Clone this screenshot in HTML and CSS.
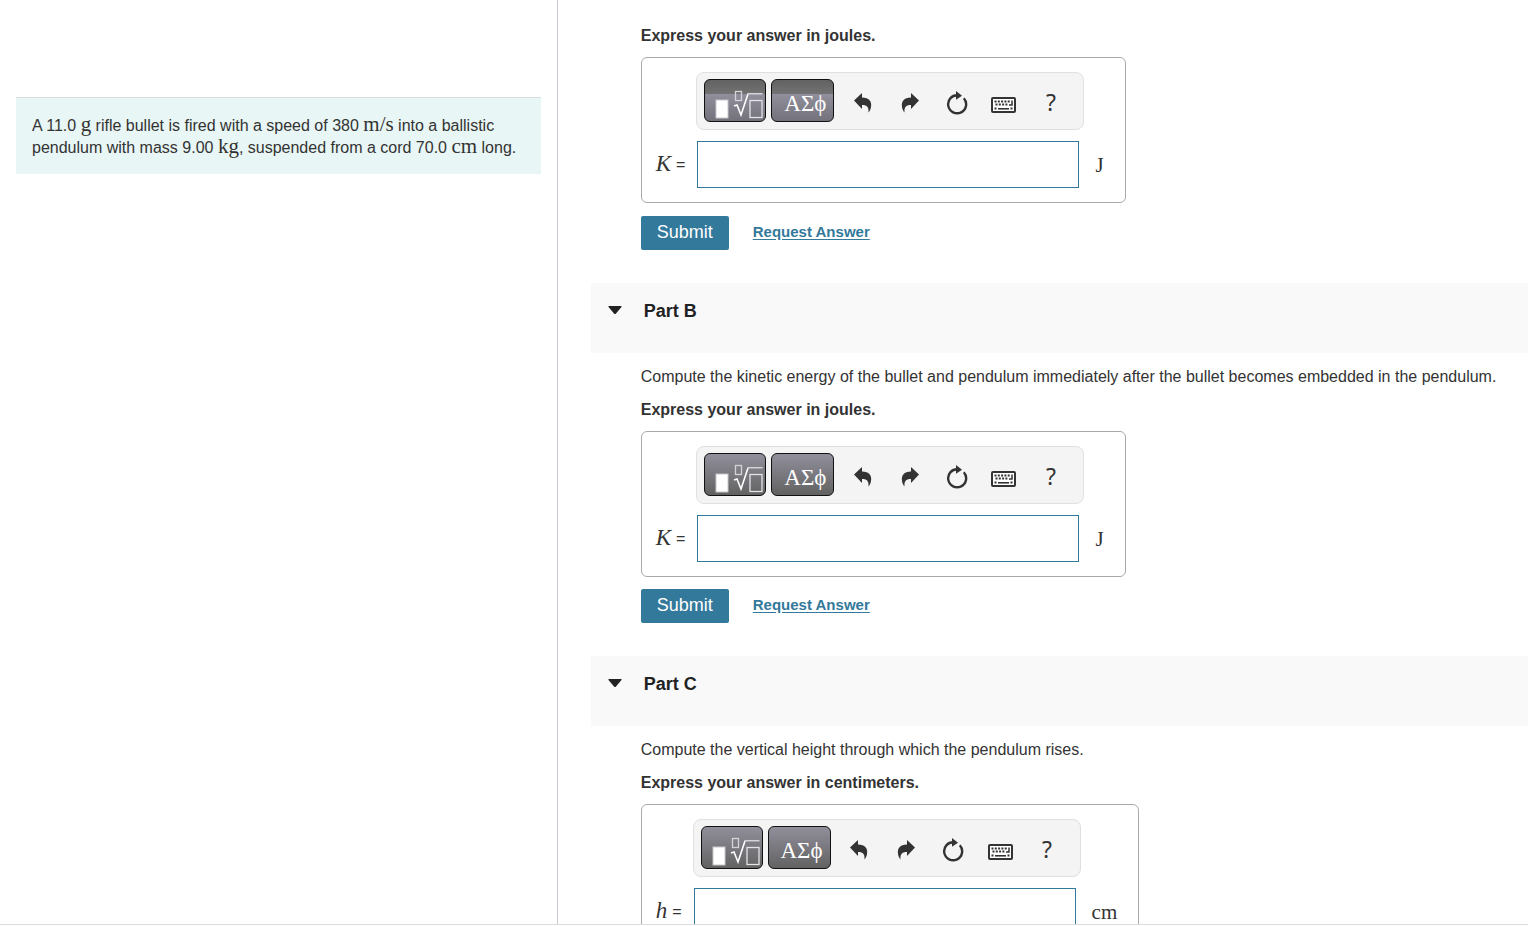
FILE: index.html
```html
<!DOCTYPE html>
<html lang="en">
<head>
<meta charset="utf-8">
<title>Ballistic pendulum</title>
<link rel="stylesheet" href="styles.css">
</head>
<body>
<svg class="sprite" aria-hidden="true">
  <symbol id="i-template" viewBox="0 0 60 41">
    <rect x="11" y="20" width="12" height="18" fill="#fff" stroke="#c8c8cc"/>
    <rect x="30.500" y="11.500" width="6" height="9" fill="none" stroke="#d4d4d8" stroke-width="1.300"/>
    <path d="M29 26l3-1 4 10 7-21" fill="none" stroke="#fff" stroke-width="1.600"/>
    <path d="M42.500 13.700h15" fill="none" stroke="#d4d4d8" stroke-width="1.500"/>
    <rect x="45" y="20.500" width="12" height="17" fill="none" stroke="#e4e4e8" stroke-width="1.300"/>
  </symbol>
  <symbol id="i-undo" viewBox="0 0 18 20">
    <path d="M0 7.500L8 0v4.500c7 0 10 4 9 9.500-.3 2-1 3.800-2.500 5.500.4-5-1-7.500-6.500-7.500v4z"/>
  </symbol>
  <symbol id="i-reset" viewBox="0 0 22 24">
    <path d="M12 4.300A9 9 0 1 0 17.800 7.200" fill="none" stroke="#333" stroke-width="2.400"/>
    <path d="M10 0l6 4.800-6 4z"/>
  </symbol>
  <symbol id="i-keyboard" viewBox="0 0 25 16">
    <rect x="1" y="1" width="23" height="14" rx="1" fill="#fff" stroke="#333" stroke-width="2"/>
    <path d="M3.500 4.500h16M4.500 7.500h13M3.500 11.500h2M19.500 11.500h2" fill="none" stroke="#333" stroke-width="1.800" stroke-dasharray="2 1.300"/>
    <path d="M7 11.800h11" fill="none" stroke="#333" stroke-width="1.600"/>
    <path d="M18 8h3V3.500" fill="none" stroke="#333" stroke-width="1.500"/>
  </symbol>
</svg>
<div class="page">
  <main class="panes">
    <aside class="intro">
      <p class="problem">A 11.0 <span class="unit">g</span> rifle bullet is fired with a speed of 380 <span class="unit">m/s</span> into a ballistic pendulum with mass 9.00 <span class="unit">kg</span>, suspended from a cord 70.0 <span class="unit">cm</span> long.</p>
    </aside>
    <div class="parts">
      <section class="part part-first">
        <form class="body">
          <p class="hint">Express your answer in joules.</p>
          <div class="answer">
            <div class="toolbar">
              <button class="dark shaded" type="button" aria-label="Templates"><svg><use href="#i-template"/></svg></button>
              <button class="dark shaded" type="button">ΑΣϕ</button>
              <div class="tools">
                <button type="button" aria-label="Undo"><svg class="arrow"><use href="#i-undo"/></svg></button>
                <button type="button" aria-label="Redo"><svg class="arrow flip"><use href="#i-undo"/></svg></button>
                <button type="button" aria-label="Reset"><svg class="reset"><use href="#i-reset"/></svg></button>
                <button type="button" aria-label="Keyboard shortcuts"><svg class="keyboard"><use href="#i-keyboard"/></svg></button>
                <button class="help" type="button">?</button>
              </div>
            </div>
            <label class="lead" for="a"><i>K</i><span>=</span></label>
            <input id="a" type="text">
            <span class="trail">J</span>
          </div>
          <div class="actions"><button class="submit" type="button">Submit</button><a href="#a">Request Answer</a></div>
        </form>
      </section>
      <section class="part">
        <header><svg class="caret" viewBox="0 0 14 8"><path d="M1 0h12q1 0 .5 1L8 7.500q-1 1-2 0L.5 1Q0 0 1 0z"/></svg><h2>Part B</h2></header>
        <form class="body">
          <p>Compute the kinetic energy of the bullet and pendulum immediately after the bullet becomes embedded in the pendulum.</p>
          <p class="hint">Express your answer in joules.</p>
          <div class="answer">
            <div class="toolbar">
              <button class="dark" type="button" aria-label="Templates"><svg><use href="#i-template"/></svg></button>
              <button class="dark" type="button">ΑΣϕ</button>
              <div class="tools">
                <button type="button" aria-label="Undo"><svg class="arrow"><use href="#i-undo"/></svg></button>
                <button type="button" aria-label="Redo"><svg class="arrow flip"><use href="#i-undo"/></svg></button>
                <button type="button" aria-label="Reset"><svg class="reset"><use href="#i-reset"/></svg></button>
                <button type="button" aria-label="Keyboard shortcuts"><svg class="keyboard"><use href="#i-keyboard"/></svg></button>
                <button class="help" type="button">?</button>
              </div>
            </div>
            <label class="lead" for="b"><i>K</i><span>=</span></label>
            <input id="b" type="text">
            <span class="trail">J</span>
          </div>
          <div class="actions"><button class="submit" type="button">Submit</button><a href="#b">Request Answer</a></div>
        </form>
      </section>
      <section class="part">
        <header><svg class="caret" viewBox="0 0 14 8"><path d="M1 0h12q1 0 .5 1L8 7.500q-1 1-2 0L.5 1Q0 0 1 0z"/></svg><h2>Part C</h2></header>
        <form class="body">
          <p>Compute the vertical height through which the pendulum rises.</p>
          <p class="hint">Express your answer in centimeters.</p>
          <div class="answer">
            <div class="toolbar">
              <button class="dark" type="button" aria-label="Templates"><svg><use href="#i-template"/></svg></button>
              <button class="dark" type="button">ΑΣϕ</button>
              <div class="tools">
                <button type="button" aria-label="Undo"><svg class="arrow"><use href="#i-undo"/></svg></button>
                <button type="button" aria-label="Redo"><svg class="arrow flip"><use href="#i-undo"/></svg></button>
                <button type="button" aria-label="Reset"><svg class="reset"><use href="#i-reset"/></svg></button>
                <button type="button" aria-label="Keyboard shortcuts"><svg class="keyboard"><use href="#i-keyboard"/></svg></button>
                <button class="help" type="button">?</button>
              </div>
            </div>
            <label class="lead" for="c"><i>h</i><span>=</span></label>
            <input id="c" type="text">
            <span class="trail">cm</span>
          </div>
        </form>
      </section>
    </div>
  </main>
</div>
</body>
</html>
```
FILE: styles.css
```css
* { box-sizing: border-box; }
body {
  margin: 0;
  background: #fff;
  color: #333;
  font: 16px/22px "Liberation Sans", Arial, sans-serif;
}
p, h2 { margin: 0; }
button { padding: 0; border: 0; background: none; font: inherit; color: inherit; }
.sprite { display: none; }

.page { height: 100vh; padding-bottom: 1px; overflow: hidden; }
.panes { display: flex; height: 100%; border-bottom: 1px solid #dcdcdc; }
.intro {
  flex: 0 0 36.5%;
  padding: 97px 16px 0;
  border-right: 1px solid #c6cad6;
}
.problem {
  padding: 17px 16px 15px;
  border-top: 1px solid #d8dede;
  background: #e8f6f5;
}
.unit, .lead, .trail { font-family: "Liberation Serif", "Times New Roman", serif; }
.unit { font-size: 21px; line-height: 16px; }

.parts { flex: 1; min-width: 0; padding: 25px 0 0 33px; overflow: hidden; }
.part header {
  display: flex;
  gap: 22px;
  height: 70px;
  padding: 17px;
  background: #f9f9f9;
}
.part h2 { color: #222; font-size: 18px; line-height: 22px; }
.caret { width: 14px; height: 8px; margin-top: 6px; fill: #222; }
.body {
  display: flex;
  flex-direction: column;
  align-items: flex-start;
  gap: 10px;
  padding: 13px 0 33px 50px;
}
.part-first .body { padding-top: 0; }
.hint { font-weight: bold; }
p + .hint { margin-top: 1px; }

.answer {
  display: grid;
  grid-template-columns: auto auto auto;
  column-gap: 11px;
  row-gap: 11px;
  align-items: center;
  padding: 14px 21px 14px 14px;
  border: 1px solid #aaa;
  border-radius: 6px;
}
.toolbar {
  grid-column: 2;
  display: flex;
  gap: 5px;
  height: 58px;
  padding: 6px 9px 6px 7px;
  border: 1px solid #e0e0e0;
  border-radius: 8px;
  background: #f4f4f4;
}
.lead { grid-column: 1; display: flex; gap: 5px; }
.lead i { font-size: 23px; }
.dark {
  width: 62px;
  height: 43px;
  border: 1px solid #111;
  border-radius: 6px;
  background: linear-gradient(#918f9b, #626262);
  color: #fff;
  font: 23px/22px "Liberation Serif", serif;
}
.dark:nth-child(2) { width: 63px; padding: 7px 0 0 5px; }
.dark svg { display: block; width: 60px; height: 41px; }
.shaded { background: linear-gradient(#626262, #727272 14px, #918f9b 14px, #73717a); }
.tools { display: flex; }
.tools button {
  display: flex;
  justify-content: center;
  align-items: center;
  width: 47px;
  height: 43px;
  padding-top: 5px;
}
.tools svg { fill: #333; }
.arrow { width: 18px; height: 20px; }
.flip { transform: scaleX(-1); }
.reset { width: 22px; height: 24px; }
.keyboard { width: 25px; height: 16px; margin-top: 4px; }
.tools .help { padding-top: 2px; font-family: "Noto Sans", sans-serif; font-size: 23px; }

.lead, .trail { font-size: 21px; line-height: 24px; white-space: nowrap; }
.lead span { font: 16px/26px "Liberation Sans", sans-serif; }
.answer input {
  width: 382px;
  height: 47px;
  margin-left: 1px;
  padding: 0 8px;
  border: 1px solid #33799b;
  background: #fff;
  font: inherit;
}
.actions { display: flex; align-items: center; gap: 24px; margin-top: 2px; }
.part-first .actions { margin-top: 3px; }
.submit {
  height: 34px;
  padding: 0 16px 2px;
  border-radius: 2px;
  background: #33799b;
  color: #fff;
  font-size: 18px;
}
.actions a { padding-bottom: 2px; color: #33799b; font-size: 15px; font-weight: bold; text-underline-offset: 2px; }
```
